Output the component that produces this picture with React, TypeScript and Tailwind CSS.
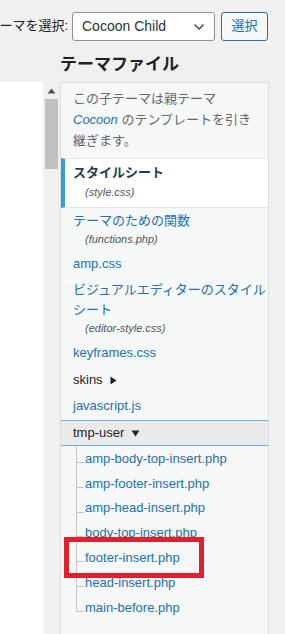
import React from "react";

const FONT = { fontFamily: '"Liberation Sans", "Noto Sans CJK JP", sans-serif' };

function FileItem({ name, sub }: { name: React.ReactNode; sub?: string }) {
  return (
    <div className="pl-[12px] py-[3px]">
      <div className="text-[13px] leading-[20px] text-[#2271b1] whitespace-nowrap">{name}</div>
      {sub && (
        <div className="pl-[12px] text-[11px] leading-[17px] italic text-[#50575e]">{sub}</div>
      )}
    </div>
  );
}

const treeFiles = [
  "amp-body-top-insert.php",
  "amp-footer-insert.php",
  "amp-head-insert.php",
  "body-top-insert.php",
  "footer-insert.php",
  "head-insert.php",
  "main-before.php",
];

export default function App() {
  return (
    <div className="relative w-[285px] h-[634px] overflow-hidden bg-[#f0f0f1]" style={FONT}>
      {/* top bar */}
      <div className="flex items-center pt-[11px]">
        <div className="w-[68px] flex justify-end text-[13px] leading-[20px] text-[#1d2327] whitespace-nowrap overflow-hidden">
          ーマを選択:
        </div>
        <div className="ml-[4px] w-[143px] h-[29px] mt-[1px] bg-white border border-[#8c8f94] rounded-[3px] flex items-center pl-[9px] pr-[8px]">
          <span className="flex-1 text-[14px] text-[#2c3338]">Cocoon Child</span>
          <svg width="12" height="8" viewBox="0 0 12 8" className="mr-[1px]">
            <path d="M1.5 1.5 L6 6 L10.5 1.5" fill="none" stroke="#50575e" strokeWidth="1.6" />
          </svg>
        </div>
        <div className="ml-[6px] w-[47px] h-[29px] bg-[#f6f7f7] border border-[#2271b1] rounded-[3px] flex items-center justify-center text-[13px] text-[#2271b1]">
          選択
        </div>
      </div>
      <div className="pl-[60px] mt-[13px] text-[17px] leading-[22px] font-bold text-[#1d2327]">
        テーマファイル
      </div>

      {/* body */}
      <div className="flex mt-[6px] h-[560px]">
        <div className="w-[43px] bg-white" />
        <div className="w-[17px] bg-[#f0f0f0] relative">
          <svg width="9" height="6" viewBox="0 0 9 6" className="absolute left-[4px] top-[6px]">
            <path d="M0.5 5.5 L4.5 0.5 L8.5 5.5 Z" fill="#505050" />
          </svg>
          <div className="absolute left-[2px] top-[17px] w-[13px] h-[70px] bg-[#c1c1c1]" />
        </div>
        <div className="w-[209px] bg-[#f6f7f7] border-x border-t border-[#dcdcde] overflow-hidden">
          <div className="pl-[12px] pr-[8px] pt-[5px] pb-[7px] text-[13px] leading-[21px] text-[#646970]">
            この子テーマは親テーマ
            <br />
            <span className="italic text-[#2271b1]">Cocoon</span> のテンプレートを引き
            <br />
            継ぎます。
          </div>

          {/* selected */}
          <div className="bg-white border-l-[4px] border-[#2ea2cc] border-y border-y-[#e4e4e4] pl-[8px] pt-[4px] pb-[6px]">
            <div className="text-[13px] leading-[20px] font-bold text-[#1e3c58]">スタイルシート</div>
            <div className="pl-[12px] text-[11px] leading-[18px] italic text-[#50575e]">(style.css)</div>
          </div>

          <FileItem name="テーマのための関数" sub="(functions.php)" />
          <FileItem name="amp.css" />
          <FileItem
            name={
              <>
                ビジュアルエディターのスタイル
                <br />
                シート
              </>
            }
            sub="(editor-style.css)"
          />
          <FileItem name="keyframes.css" />
          <div className="pl-[12px] pt-[4px] pb-[3px] text-[13px] leading-[20px] text-[#1d2327] flex items-center">
            skins
            <svg width="7" height="9" viewBox="0 0 7 9" className="ml-[7px]">
              <path d="M0.5 0.5 L6.5 4.5 L0.5 8.5 Z" fill="#1d2327" />
            </svg>
          </div>
          <FileItem name="javascript.js" />

          <div className="mt-[1px] h-[26px] bg-[#eaeaeb] border-y border-[#72aee6] pl-[12px] flex items-center text-[13px] text-[#1d2327]">
            tmp-user
            <svg width="9" height="7" viewBox="0 0 9 7" className="ml-[7px]">
              <path d="M0.5 0.5 L8.5 0.5 L4.5 6.5 Z" fill="#1d2327" />
            </svg>
          </div>

          <div className="ml-[15px]">
            {treeFiles.map((f, i) => (
              <div key={f} className="relative h-[24.8px] pl-[9px] flex items-center text-[13px] text-[#2271b1]">
                <div
                  className={
                    i === treeFiles.length - 1
                      ? "absolute left-0 top-0 h-[17px] border-l border-[#c3c4c7]"
                      : "absolute left-0 top-0 bottom-0 border-l border-[#c3c4c7]"
                  }
                />
                <div className="absolute left-0 top-[16px] w-[8px] border-t border-[#c3c4c7]" />
                <span className="leading-[19px]">{f}</span>
              </div>
            ))}
          </div>
        </div>
      </div>

      {/* red highlight */}
      <div className="absolute left-[64px] top-[537px] w-[140px] h-[41px] border-[5px] border-[#e0202a]" />
    </div>
  );
}
